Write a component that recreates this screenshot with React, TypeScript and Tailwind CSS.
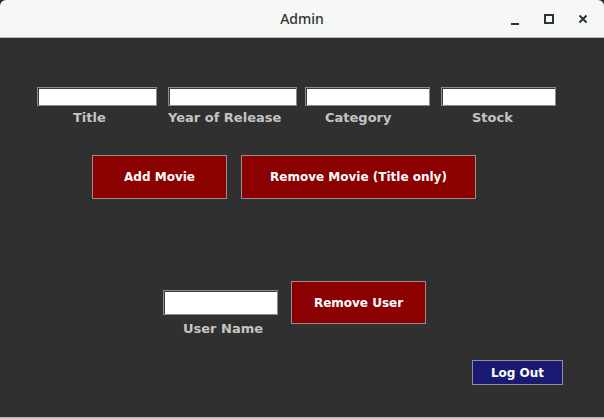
import React from 'react';

const Field: React.FC<{ label: string; width: string; labelMl: string }> = ({ label, width, labelMl }) => (
  <div className="flex flex-col">
    <div className={`${width} h-[19px] bg-white border border-[#8c8c8c] shadow-[inset_1px_1px_0_#3a3a3a]`} />
    <span className={`${labelMl} mt-[4px] leading-4 text-[13px] font-bold text-[#c4c4c4]`}>{label}</span>
  </div>
);

export default function App() {
  return (
    <div className="w-[604px] h-[419px] bg-[#2b2b2b] overflow-hidden" style={{ fontFamily: '"DejaVu Sans", sans-serif' }}>
      {/* Title bar */}
      <div className="relative h-[38px] bg-[#f6f8f5] rounded-t-[6px] border-b border-[#b9bbb7] flex items-center justify-center">
        <span className="text-[14px] text-[#2e3436] font-medium" style={{ fontFamily: '"Noto Sans", sans-serif' }}>Admin</span>
        <div className="absolute right-[4px] top-0 h-full flex items-center">
          <svg width="34" height="38" viewBox="0 0 34 38">
            <rect x="13" y="23" width="8" height="2" fill="#2e3436" />
          </svg>
          <svg width="34" height="38" viewBox="0 0 34 38">
            <rect x="13" y="15" width="8" height="8" fill="none" stroke="#2e3436" strokeWidth="2" />
          </svg>
          <svg width="34" height="38" viewBox="0 0 34 38">
            <path d="M13.5 15.5 L20.5 22.5 M20.5 15.5 L13.5 22.5" stroke="#2e3436" strokeWidth="2" />
          </svg>
        </div>
      </div>

      {/* Content */}
      <div className="h-[381px] bg-[#303030] border-b-2 border-[#bfbfbf] flex flex-col">
        <div className="flex pl-[37px] mt-[49px]">
          <Field label="Title" width="w-[120px]" labelMl="ml-[36px]" />
          <div className="ml-[11px]">
            <Field label="Year of Release" width="w-[129px]" labelMl="ml-0" />
          </div>
          <div className="ml-[8px]">
            <Field label="Category" width="w-[125px]" labelMl="ml-[20px]" />
          </div>
          <div className="ml-[11px]">
            <Field label="Stock" width="w-[115px]" labelMl="ml-[31px]" />
          </div>
        </div>

        <div className="flex pl-[92px] mt-[29px] gap-[14px]">
          <button className="w-[135px] h-[44px] bg-[#8b0000] border border-[#9a8a8a] text-white text-[12px] font-bold">
            Add Movie
          </button>
          <button className="w-[235px] h-[44px] bg-[#8b0000] border border-[#9a8a8a] text-white text-[12px] font-bold">
            Remove Movie (Title only)
          </button>
        </div>

        <div className="flex pl-[163px] mt-[82px] items-start">
          <div className="flex flex-col mt-[9px]">
            <div className="w-[115px] h-[25px] bg-white border border-[#8c8c8c] shadow-[inset_1px_1px_0_#3a3a3a]" />
            <span className="ml-[20px] mt-[6px] leading-4 text-[13px] font-bold text-[#c4c4c4]">User Name</span>
          </div>
          <button className="ml-[13px] w-[135px] h-[43px] bg-[#8b0000] border border-[#9a8a8a] text-white text-[12px] font-bold">
            Remove User
          </button>
        </div>

        <div className="flex justify-end pr-[41px] mt-[23px]">
          <button className="w-[91px] h-[25px] bg-[#1a1a72] border border-[#8d8da8] text-white text-[12px] font-bold">
            Log Out
          </button>
        </div>
      </div>
    </div>
  );
}
